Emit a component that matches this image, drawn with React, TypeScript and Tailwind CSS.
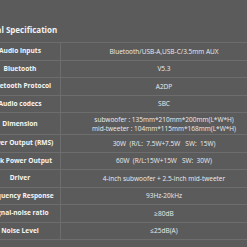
const specs: { label: string; value: string[]; tall?: boolean }[] = [
  { label: "Audio inputs", value: ["Bluetooth/USB-A,USB-C/3.5mm AUX"] },
  { label: "Bluetooth", value: ["V5.3"] },
  { label: "Bluetooth Protocol", value: ["A2DP"] },
  { label: "Audio codecs", value: ["SBC"] },
  {
    label: "Dimension",
    value: ["subwoofer : 135mm*210mm*200mm(L*W*H)", "mid-tweeter : 104mm*115mm*168mm(L*W*H)"],
    tall: true,
  },
  { label: "Power Output (RMS)", value: ["30W\u00a0\u00a0(R/L:\u00a0\u00a07.5W+7.5W\u00a0\u00a0\u00a0SW:\u00a0\u00a015W)"] },
  { label: "Peak Power Output", value: ["60W\u00a0\u00a0(R/L:15W+15W\u00a0\u00a0\u00a0SW:\u00a0\u00a030W)"] },
  { label: "Driver", value: ["4-inch subwoofer + 2.5-inch mid-tweeter"] },
  { label: "Frequency Response", value: ["93Hz-20kHz"] },
  { label: "Signal-noise ratio", value: ["≥80dB"] },
  { label: "Noise Level", value: ["≤25dB(A)"] },
];

export default function App() {
  return (
    <div className="w-[247px] h-[247px] overflow-hidden bg-[#5b5b5b] font-['Open_Sans',sans-serif]">
      <div className="w-[320px] ml-[-20px]">
        <div className="pt-[24px] h-[42px]">
          <div className="ml-[-14px] text-[8px] font-bold text-[#f2f2f2] leading-[12px]">Technical Specification</div>
        </div>
        <div className="border-t border-[#6d6d6d]">
          {specs.map((s) => (
            <div
              key={s.label}
              className={`flex border-b border-[#6d6d6d] ${s.tall ? "h-[22px]" : "h-[17.5px]"}`}
            >
              <div className="w-[81px] shrink-0 border-r border-[#6d6d6d] flex items-center justify-center text-[6.6px] font-bold text-[#f4f4f4] whitespace-nowrap">
                {s.label}
              </div>
              <div className="w-[206px] flex flex-col items-center justify-center text-[6.5px] leading-[9px] text-[#ececec] whitespace-nowrap">
                {s.value.map((v) => (
                  <span key={v}>{v}</span>
                ))}
              </div>
            </div>
          ))}
        </div>
      </div>
    </div>
  );
}
